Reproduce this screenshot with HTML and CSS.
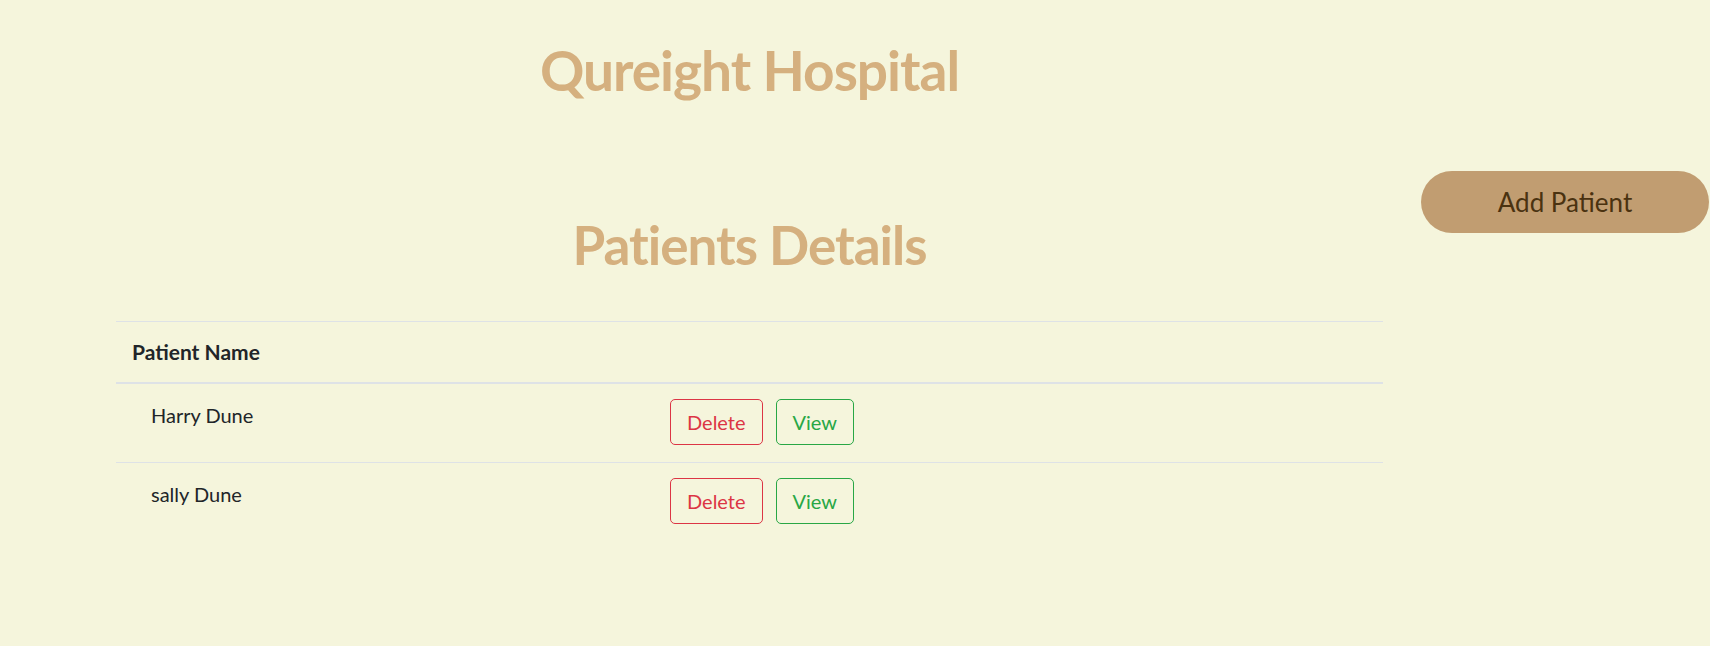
FILE: index.html
```html
<!DOCTYPE html>
<html lang="en">
<head>
<meta charset="utf-8">
<title>Qureight Hospital</title>
<link rel="stylesheet" href="styles.css">
</head>
<body>
<div class="page">
  <main class="main">
    <h1 class="title">Qureight Hospital</h1>
    <h2 class="subtitle">Patients Details</h2>
    <table class="patients">
      <colgroup><col class="col-name"><col></colgroup>
      <thead>
        <tr><th>Patient Name</th><th></th></tr>
      </thead>
      <tbody>
        <tr>
          <td><div class="name">Harry Dune</div></td>
          <td><div class="actions"><button class="btn btn-delete">Delete</button><button class="btn btn-view">View</button></div></td>
        </tr>
        <tr>
          <td><div class="name">sally Dune</div></td>
          <td><div class="actions"><button class="btn btn-delete">Delete</button><button class="btn btn-view">View</button></div></td>
        </tr>
      </tbody>
    </table>
  </main>
  <aside class="side">
    <button class="add-btn">Add Patient</button>
  </aside>
</div>
</body>
</html>
```

FILE: styles.css
```css
html, body {
  margin: 0;
  padding: 0;
  background: #f5f5dc;
}
body {
  font-family: Lato, "Liberation Sans", sans-serif;
  color: #212529;
  overflow: hidden;
}
.page {
  display: flex;
  align-items: flex-start;
}
.main {
  margin-left: 116px;
  width: 1267px;
  flex: none;
}
.title, .subtitle {
  margin: 0;
  text-align: center;
  color: #d5b07f;
  font-weight: 700;
  line-height: 1.2;
  letter-spacing: -1px;
}
.title {
  font-size: 55px;
  margin-top: 37px;
}
.subtitle {
  font-size: 53px;
  margin-top: 110px;
}
.patients {
  margin-top: 44px;
  width: 100%;
  border-collapse: collapse;
  table-layout: fixed;
  font-size: 21px;
}
.col-name {
  width: 538px;
}
.patients th {
  text-align: left;
  font-weight: 700;
  padding: 14px 16px;
  line-height: 32px;
  border-top: 1px solid #dee2e6;
  border-bottom: 2px solid #dee2e6;
}
.patients td {
  padding: 15px 16px 17px;
  vertical-align: top;
  line-height: 32px;
}
.patients tbody tr + tr td {
  border-top: 1px solid #dee2e6;
}
.name {
  padding-left: 19px;
  font-size: 20px;
}
.actions {
  display: flex;
  gap: 13px;
}
.btn {
  font-family: Lato, "Liberation Sans", sans-serif;
  font-size: 20px;
  line-height: 30px;
  padding: 7px 16px;
  background: transparent;
  border: 1px solid;
  border-radius: 5px;
}
.btn-delete {
  color: #dc3545;
  border-color: #dc3545;
}
.btn-view {
  color: #28a745;
  border-color: #28a745;
}
.side {
  margin-left: 38px;
  margin-top: 171px;
  flex: none;
}
.add-btn {
  width: 288px;
  height: 62px;
  border: none;
  border-radius: 31px;
  background: #c19d71;
  color: #4a3210;
  font-family: Lato, "Liberation Sans", sans-serif;
  font-size: 26px;
  padding: 0;
}
```
